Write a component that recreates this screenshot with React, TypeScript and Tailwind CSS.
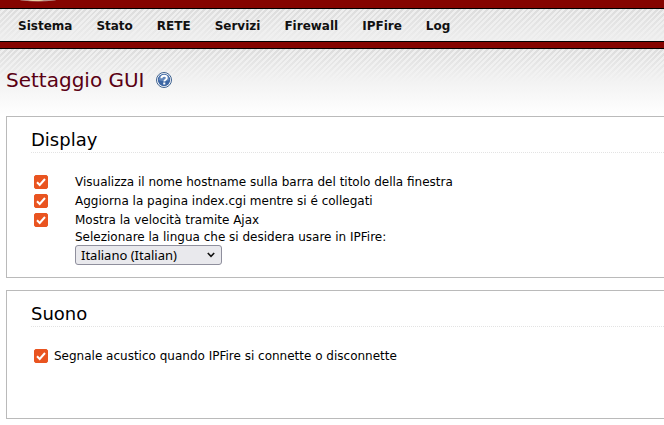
import React from 'react';

interface OptionItem {
  id: string;
  label: string;
}

const menuItems = ['Sistema', 'Stato', 'RETE', 'Servizi', 'Firewall', 'IPFire', 'Log'];

const displayOptions: OptionItem[] = [
  { id: 'windowwithhostname', label: 'Visualizza il nome hostname sulla barra del titolo della finestra' },
  { id: 'refreshindex', label: 'Aggiorna la pagina index.cgi mentre si é collegati' },
  { id: 'speed', label: 'Mostra la velocità tramite Ajax' }
];

const Checkbox: React.FC<{ id: string }> = ({ id }) => (
  <span className="relative block size-[14px] shrink-0">
    <input
      id={id}
      type="checkbox"
      defaultChecked
      className="peer block size-full appearance-none rounded-[2px] border border-gray-400 bg-white checked:border-[#e95420] checked:bg-[#e95420]"
    />
    <svg
      viewBox="0 0 14 14"
      className="pointer-events-none absolute inset-0 hidden peer-checked:block"
      fill="none"
      stroke="#fff"
      strokeWidth="2"
    >
      <path d="M3 7.3 5.7 10 11 4" />
    </svg>
  </span>
);

const HelpIcon = () => (
  <svg viewBox="0 0 16 16" className="size-4">
    <circle cx="8" cy="8" r="7.5" fill="#fff" stroke="#3d618f" />
    <circle cx="8" cy="8" r="6.2" fill="#3c66a4" />
    <path d="M2.6 8a5.4 5.4 0 0 1 10.8 0c-3 1.4-7.8 1.4-10.8 0z" fill="#7c9dc9" opacity="0.6" />
    <path d="M5.4 6.3c0-1.7 1.1-2.6 2.7-2.6s2.7.9 2.7 2.3c0 1.7-2.5 1.7-2.5 3.4" fill="none" stroke="#fff" strokeWidth="1.9" />
    <rect x="7.2" y="10.5" width="2.1" height="2" fill="#fff" />
  </svg>
);

const Panel: React.FC<{ title: string; children: React.ReactNode }> = ({ title, children }) => (
  <section className="border-y border-l border-[#bababa] bg-white pl-6">
    <h2 className="mt-[11px] border-b border-dotted border-[#e3e3e3] text-[18px] leading-6">{title}</h2>
    {children}
  </section>
);

const App: React.FC = () => {
  return (
    <div className="min-h-screen bg-white font-['DejaVu_Sans',sans-serif] text-[12px] text-black">
      {/* Banner with the lower edge of the logo */}
      <div className="h-2 overflow-hidden bg-[#850400]">
        <svg viewBox="0 0 40 2" className="ml-[18px] h-[2px] w-10">
          <ellipse cx="20" cy="-1" rx="20" ry="2.5" fill="#b98b83" />
          <ellipse cx="18" cy="-1" rx="9" ry="2" fill="#e8cf9e" />
        </svg>
      </div>

      {/* Menu */}
      <nav className="relative border-y border-black">
        <div className="absolute inset-0 bg-[repeating-linear-gradient(135deg,#dadada_0px,#dadada_2px,#eeeeee_2px,#eeeeee_4px)]" />
        <div className="absolute inset-0 bg-linear-to-b from-[#f0f0f0]/10 to-[#f0f0f0]/90" />
        <ul className="relative flex h-8 items-center gap-6 pt-[2px] pl-[18px] font-bold text-[#111]">
          {menuItems.map((item) => (
            <li key={item}>
              <a href="#">{item}</a>
            </li>
          ))}
        </ul>
      </nav>
      <div className="h-[7px] border-b border-black bg-[#850400]" />

      {/* Page title */}
      <header className="relative">
        <div className="absolute inset-0 bg-[repeating-linear-gradient(135deg,#dadada_0px,#dadada_2px,#eeeeee_2px,#eeeeee_4px)]" />
        <div className="absolute inset-0 bg-linear-to-b from-[#f0f0f0]/10 via-[#f3f3f3] via-50% to-white" />
        <div className="relative flex h-[67px] items-center gap-[11px] pb-[6px] pl-[6px]">
          <h1 className="text-[20px] text-[#5a0013]">Settaggio GUI</h1>
          <a href="#" aria-label="Help">
            <HelpIcon />
          </a>
        </div>
      </header>

      <form className="flex flex-col gap-3 pl-[6px]">
        <Panel title="Display">
          <div className="mt-[19px] pb-3 pl-[3px]">
            {displayOptions.map((option) => (
              <div key={option.id} className="flex h-[19px] items-center gap-[27px]">
                <Checkbox id={option.id} />
                <label htmlFor={option.id}>{option.label}</label>
              </div>
            ))}
            <div className="flex flex-col items-start pl-[41px]">
              <label htmlFor="lang" className="leading-4">
                Selezionare la lingua che si desidera usare in IPFire:
              </label>
              <span className="relative">
                <select
                  id="lang"
                  defaultValue="it"
                  className="block h-5 w-[147px] appearance-none rounded-[3px] border border-[#8f8f9d] bg-[#e9e9ed] pl-[5px] font-['Noto_Sans',sans-serif] text-[13px] leading-[18px]"
                >
                  <option value="it">Italiano (Italian)</option>
                  <option value="en">English (English)</option>
                </select>
                <svg
                  viewBox="0 0 8 6"
                  className="pointer-events-none absolute top-[7px] right-[7px] h-[6px] w-2"
                  fill="none"
                  stroke="#111"
                  strokeWidth="1.6"
                >
                  <path d="M.8 1 4 4.3 7.2 1" />
                </svg>
              </span>
            </div>
          </div>
        </Panel>

        <Panel title="Suono">
          <div className="mt-[19px] pb-[52px] pl-[3px]">
            <div className="flex h-5 items-center gap-[6px]">
              <Checkbox id="soundwhenup" />
              <label htmlFor="soundwhenup">Segnale acustico quando IPFire si connette o disconnette</label>
            </div>
          </div>
        </Panel>
      </form>
    </div>
  );
};

export default App;
